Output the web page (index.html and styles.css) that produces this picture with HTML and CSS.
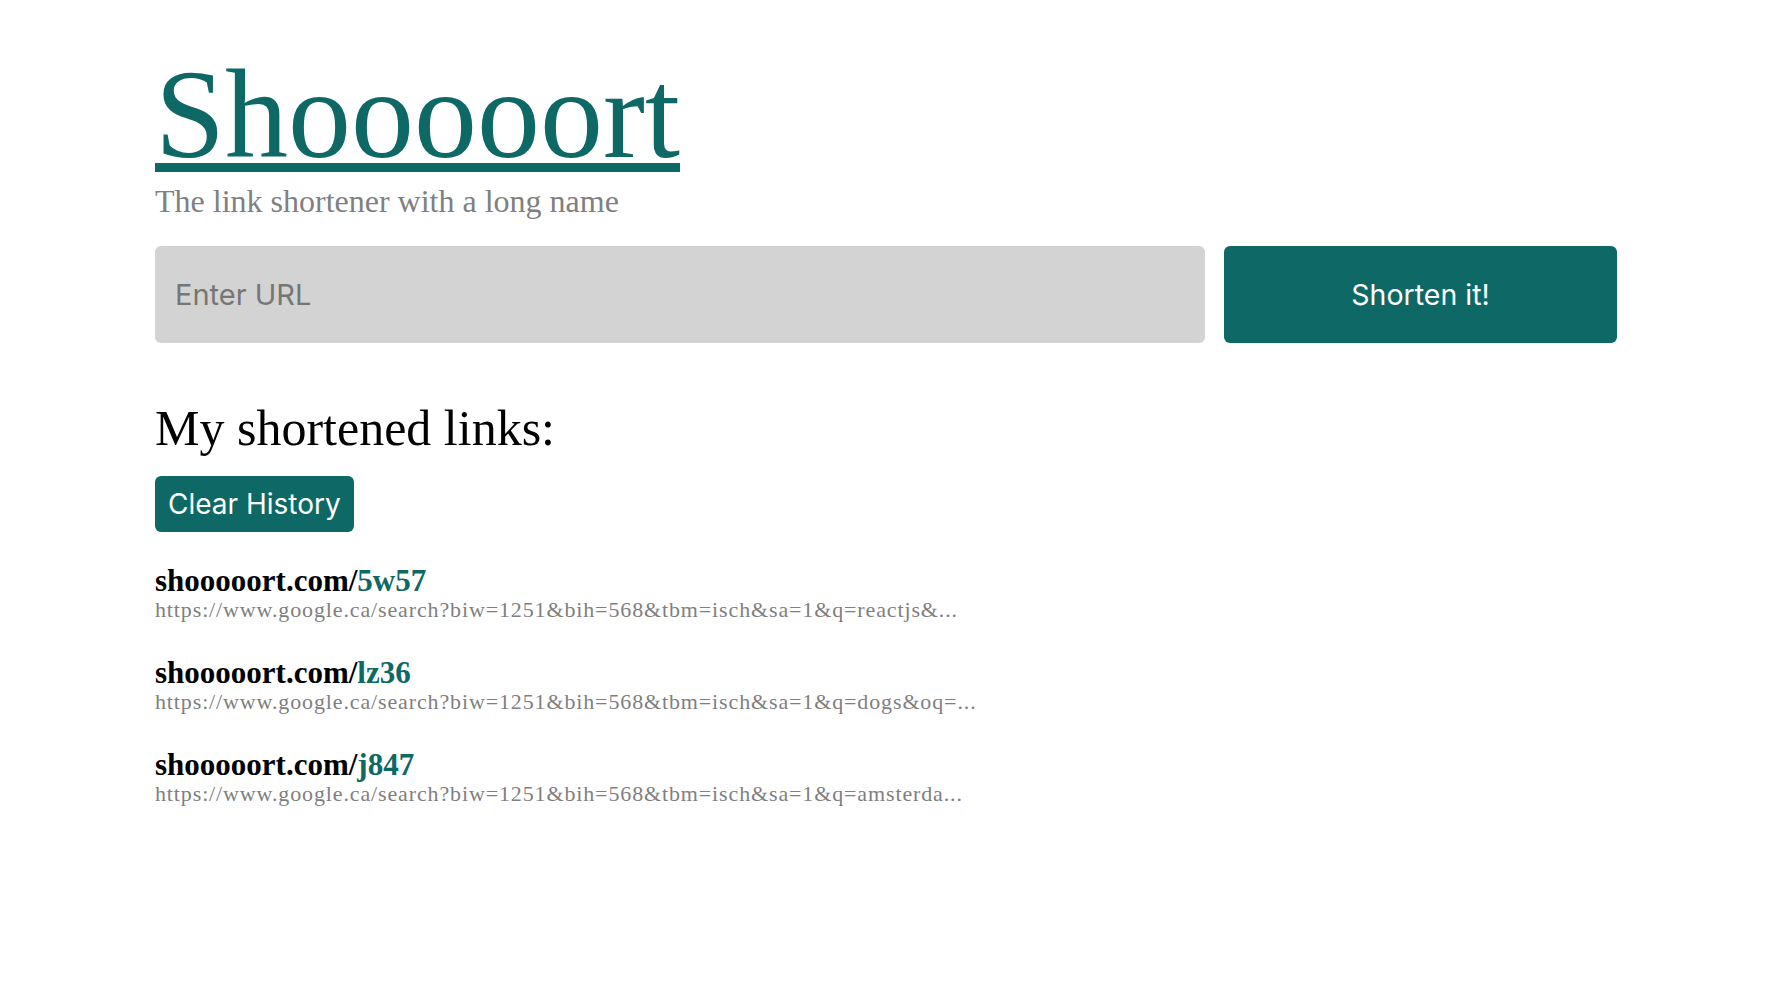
FILE: index.html
```html
<!DOCTYPE html>
<html lang="en">
<head>
<meta charset="utf-8">
<title>Shooooort</title>
<link rel="stylesheet" href="styles.css">
</head>
<body>
<div class="page">
  <header class="header">
    <h1 class="title"><a href="#">Shooooort</a></h1>
    <p class="tagline">The link shortener with a long name</p>
  </header>
  <form class="shorten-form">
    <input class="url-input" type="text" placeholder="Enter URL">
    <button class="shorten-btn" type="button">Shorten it!</button>
  </form>
  <section class="history">
    <h2 class="history-title">My shortened links:</h2>
    <button class="clear-btn" type="button">Clear History</button>
    <ul class="link-list">
      <li class="link-item">
        <div class="short">shooooort.com/<span class="code">5w57</span></div>
        <div class="long">https://www.google.ca/search?biw=1251&amp;bih=568&amp;tbm=isch&amp;sa=1&amp;q=reactjs&amp;...</div>
      </li>
      <li class="link-item">
        <div class="short">shooooort.com/<span class="code">lz36</span></div>
        <div class="long">https://www.google.ca/search?biw=1251&amp;bih=568&amp;tbm=isch&amp;sa=1&amp;q=dogs&amp;oq=...</div>
      </li>
      <li class="link-item">
        <div class="short">shooooort.com/<span class="code">j847</span></div>
        <div class="long">https://www.google.ca/search?biw=1251&amp;bih=568&amp;tbm=isch&amp;sa=1&amp;q=amsterda...</div>
      </li>
    </ul>
  </section>
</div>
</body>
</html>
```

FILE: styles.css
```css
html, body {
  margin: 0;
  padding: 0;
  background: #ffffff;
}

body {
  font-family: "Liberation Serif", "Times New Roman", serif;
  color: #000;
}

.page {
  padding: 52px 149px 0 155px;
}

.header {
  display: flex;
  flex-direction: column;
  align-items: flex-start;
}

.title {
  margin: 0;
  font-size: 126px;
  line-height: 126px;
  font-weight: normal;
}

.title a {
  color: #0d6866;
  text-decoration: underline;
  text-decoration-thickness: 9px;
  text-underline-offset: 6px;
}

.tagline {
  margin: 3px 0 0;
  font-size: 32px;
  line-height: 40px;
  color: #808080;
}

.shorten-form {
  display: flex;
  gap: 19px;
  margin-top: 25px;
  height: 97px;
}

.url-input {
  flex: 1;
  box-sizing: border-box;
  border: none;
  border-radius: 6px;
  background: #d3d3d3;
  padding: 0 20px;
  font-family: "Inter", "Roboto", sans-serif;
  font-size: 29px;
  color: #333;
  outline: none;
}

.url-input::placeholder {
  color: #767676;
}

.shorten-btn {
  width: 393px;
  border: none;
  border-radius: 6px;
  background: #0d6866;
  color: #fff;
  font-family: "Inter", "Roboto", sans-serif;
  font-size: 28.5px;
  cursor: pointer;
}

.history {
  display: flex;
  flex-direction: column;
  align-items: flex-start;
  margin-top: 55px;
}

.history-title {
  margin: 0;
  font-size: 50px;
  line-height: 60px;
  font-weight: normal;
}

.clear-btn {
  margin-top: 18px;
  height: 56px;
  padding: 0 13px;
  border: none;
  border-radius: 6px;
  background: #0d6866;
  color: #fff;
  font-family: "Inter", "Roboto", sans-serif;
  font-size: 28px;
  cursor: pointer;
}

.link-list {
  list-style: none;
  margin: 33px 0 0;
  padding: 0;
  display: flex;
  flex-direction: column;
  gap: 34px;
}

.short {
  font-size: 31px;
  line-height: 32px;
  font-weight: bold;
}

.code {
  color: #0d6866;
}

.long {
  font-size: 22px;
  line-height: 26px;
  letter-spacing: 0.87px;
  color: #7f7f7f;
}
```
